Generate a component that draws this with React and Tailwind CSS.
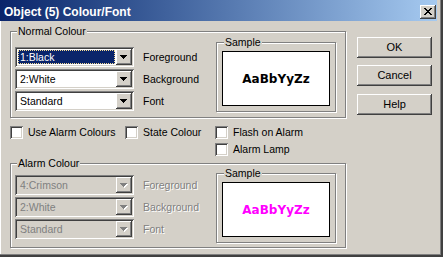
import React from "react";

const sunken =
  "shadow-[inset_1px_1px_0_#808080,inset_-1px_-1px_0_#ffffff,inset_2px_2px_0_#404040,inset_-2px_-2px_0_#d4d0c8]";
const raised =
  "shadow-[inset_-1px_-1px_0_#404040,inset_1px_1px_0_#ffffff,inset_-2px_-2px_0_#808080,inset_2px_2px_0_#d4d0c8]";
const etched = "border border-[#808080] shadow-[1px_1px_0_#ffffff,inset_1px_1px_0_#ffffff]";

function Arrow({ disabled }) {
  if (disabled) {
    return (
      <svg width="8" height="5" viewBox="0 0 8 5" shapeRendering="crispEdges">
        <path d="M1 1h7v1H1z M2 2h5v1H2z M3 3h3v1H3z M4 4h1v1H4z" fill="#ffffff" />
        <path d="M0 0h7v1H0z M1 1h5v1H1z M2 2h3v1H2z M3 3h1v1H3z" fill="#808080" />
      </svg>
    );
  }
  return (
    <svg width="8" height="5" viewBox="0 0 8 5" shapeRendering="crispEdges">
      <path d="M0 0h7v1H0z M1 1h5v1H1z M2 2h3v1H2z M3 3h1v1H3z" fill="#000000" />
    </svg>
  );
}

function Combo({ text, selected, disabled }) {
  return (
    <div
      className={`w-[119px] h-[20px] p-[2px] flex ${sunken} ${
        disabled ? "bg-[#d4d0c8]" : "bg-white"
      }`}
    >
      <div className="flex-1 min-w-0 p-px flex">
        <div
          className={`flex-1 flex items-center pl-px border ${
            selected
              ? "bg-[#0a246a] text-white border-dotted border-[#f5db95]"
              : "border-transparent"
          } ${disabled ? "text-[#808080]" : ""}`}
        >
          {text}
        </div>
      </div>
      <div
        className={`w-[16px] h-full bg-[#d4d0c8] flex items-center justify-center pt-px ${raised}`}
      >
        <Arrow disabled={disabled} />
      </div>
    </div>
  );
}

function Row({ text, label, selected, disabled }) {
  return (
    <div className="flex items-center">
      <Combo text={text} selected={selected} disabled={disabled} />
      <span
        className={`ml-[9px] ${
          disabled ? "text-[#808080] [text-shadow:1px_1px_0_#ffffff]" : ""
        }`}
      >
        {label}
      </span>
    </div>
  );
}

function Sample({ color, className }) {
  return (
    <div className={`relative w-[120px] h-[70px] ${etched} pt-[8px] px-[5px] pb-[5px] flex ${className}`}>
      <span className="absolute left-[7px] -top-[7px] px-px bg-[#d4d0c8] leading-[12px]">
        Sample
      </span>
      <div className="flex-1 bg-white border border-black flex items-center justify-center">
        <span
          className={`font-['DejaVu_Sans',sans-serif] font-bold text-[12px] ${color}`}
        >
          AaBbYyZz
        </span>
      </div>
    </div>
  );
}

function Check({ label }) {
  return (
    <div className="flex items-center h-[13px]">
      <div className={`w-[13px] h-[13px] bg-white ${sunken}`} />
      <span className="ml-[5px]">{label}</span>
    </div>
  );
}

function Button({ children, className }) {
  return (
    <div
      className={`w-[75px] h-[21px] bg-[#d4d0c8] flex items-center justify-center text-[11px] ${raised} ${className}`}
    >
      {children}
    </div>
  );
}

export default function App() {
  return (
    <div className="w-[443px] h-[257px] bg-[#404040] flex pr-[2px] pb-[2px] font-['Liberation_Sans',Arial,sans-serif] text-[10.5px] text-black leading-none select-none">
      <div className="flex-1 bg-[#808080] flex pr-px pb-px">
        <div className="flex-1 bg-[#d4d0c8] flex flex-col pr-[3px] min-w-0">
          <div className="h-[21px] flex items-center pt-[2px] pl-[4px] pr-[1px] bg-gradient-to-r from-[#0a246a] to-[#a6caf0]">
            <span className="flex-1 text-white font-bold text-[12px]">
              Object (5) Colour/Font
            </span>
            <div
              className={`w-[16px] h-[14px] bg-[#d4d0c8] flex items-center justify-center ${raised}`}
            >
              <svg width="8" height="7" viewBox="0 0 8 7" shapeRendering="crispEdges">
                <path
                  d="M0 0h2v1H0z M6 0h2v1H6z M1 1h2v1H1z M5 1h2v1H5z M2 2h4v1H2z M3 3h2v1H3z M2 4h4v1H2z M1 5h2v1H1z M5 5h2v1H5z M0 6h2v1H0z M6 6h2v1H6z"
                  fill="#000"
                />
              </svg>
            </div>
          </div>

          <div className="flex-1 border-l border-white flex items-start">
            {/* left column */}
            <div className="ml-[9px] mt-[10px] w-[336px] flex flex-col">
              {/* Normal colour */}
              <div className={`relative h-[87px] ${etched} flex items-start`}>
                <span className="absolute left-[6px] -top-[7px] px-px bg-[#d4d0c8] leading-[12px]">
                  Normal Colour
                </span>
                <div className="w-[205px] pl-[4px] pt-[15px] flex flex-col gap-[2px]">
                  <Row text="1:Black" label="Foreground" selected />
                  <Row text="2:White" label="Background" />
                  <Row text="Standard" label="Font" />
                </div>
                <Sample color="text-black" className="mt-[10px]" />
              </div>

              {/* checkboxes */}
              <div className="mt-[8px] flex">
                <div className="w-[115px]">
                  <Check label="Use Alarm Colours" />
                </div>
                <div className="w-[90px]">
                  <Check label="State Colour" />
                </div>
                <div className="flex flex-col gap-[4px]">
                  <Check label="Flash on Alarm" />
                  <Check label="Alarm Lamp" />
                </div>
              </div>

              {/* Alarm colour */}
              <div className={`relative mt-[7px] h-[85px] ${etched} flex items-start`}>
                <span className="absolute left-[6px] -top-[7px] px-px bg-[#d4d0c8] leading-[12px]">
                  Alarm Colour
                </span>
                <div className="w-[205px] pl-[4px] pt-[11px] flex flex-col gap-[2px]">
                  <Row text="4:Crimson" label="Foreground" disabled />
                  <Row text="2:White" label="Background" disabled />
                  <Row text="Standard" label="Font" disabled />
                </div>
                <Sample color="text-[#ff00ff]" className="mt-[9px]" />
              </div>
            </div>

            {/* buttons */}
            <div className="ml-[11px] mt-[16px] flex flex-col">
              <Button>OK</Button>
              <Button className="mt-[7px]">Cancel</Button>
              <Button className="mt-[8px]">Help</Button>
            </div>
          </div>
        </div>
      </div>
    </div>
  );
}
